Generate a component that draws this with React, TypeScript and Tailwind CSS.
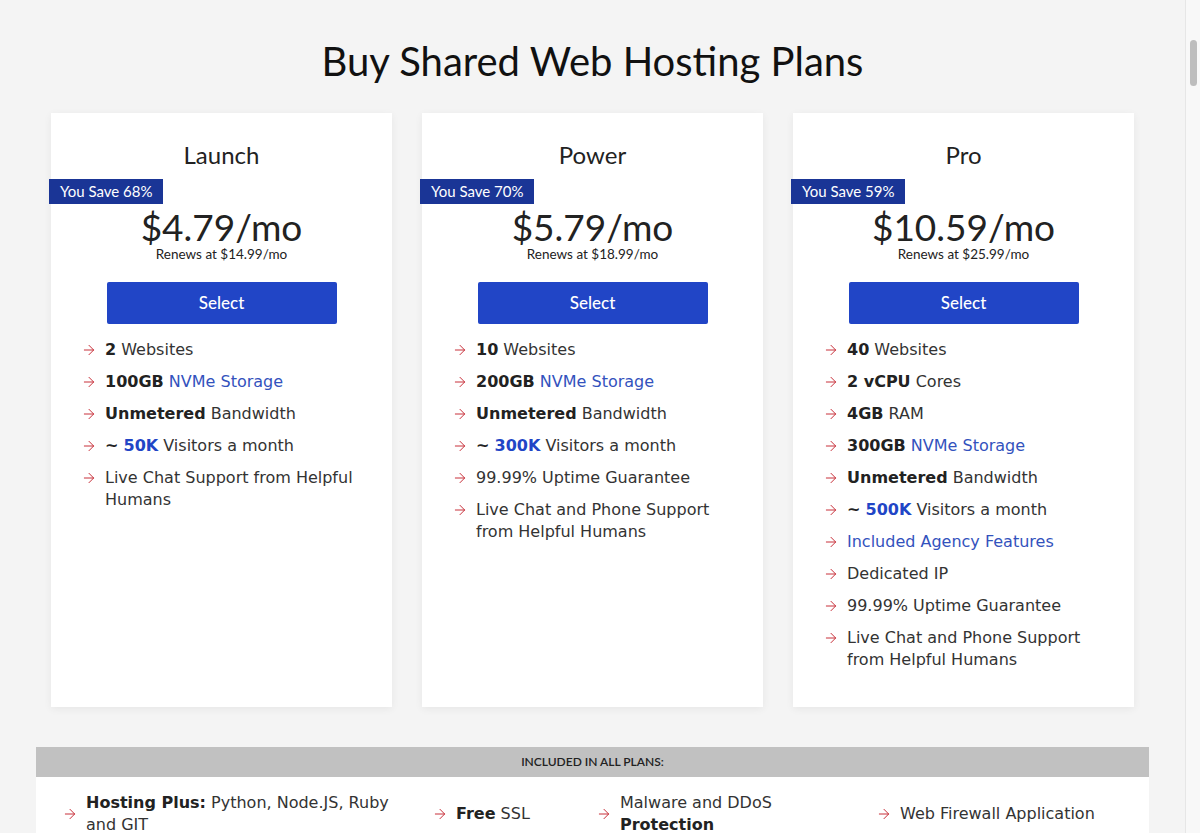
import { ArrowRight } from "lucide-react";
import type { ReactNode } from "react";

type Plan = {
    name: string;
    save: string;
    price: string;
    renews: string;
    features: ReactNode[];
};

const B = ({ children }: { children: ReactNode }) => <span className="font-bold text-[#222]">{children}</span>;
const Link = ({ children }: { children: ReactNode }) => <span className="text-[#3352bd]">{children}</span>;
const Hi = ({ children }: { children: ReactNode }) => <span className="font-bold text-[#2145c6]">{children}</span>;

const plans: Plan[] = [
    {
        name: "Launch",
        save: "You Save 68%",
        price: "$4.79",
        renews: "Renews at $14.99/mo",
        features: [
            <><B>2</B> Websites</>,
            <><B>100GB</B> <Link>NVMe Storage</Link></>,
            <><B>Unmetered</B> Bandwidth</>,
            <><B>~</B> <Hi>50K</Hi> Visitors a month</>,
            <>Live Chat Support from Helpful Humans</>,
        ],
    },
    {
        name: "Power",
        save: "You Save 70%",
        price: "$5.79",
        renews: "Renews at $18.99/mo",
        features: [
            <><B>10</B> Websites</>,
            <><B>200GB</B> <Link>NVMe Storage</Link></>,
            <><B>Unmetered</B> Bandwidth</>,
            <><B>~</B> <Hi>300K</Hi> Visitors a month</>,
            <>99.99% Uptime Guarantee</>,
            <>Live Chat and Phone Support from Helpful Humans</>,
        ],
    },
    {
        name: "Pro",
        save: "You Save 59%",
        price: "$10.59",
        renews: "Renews at $25.99/mo",
        features: [
            <><B>40</B> Websites</>,
            <><B>2 vCPU</B> Cores</>,
            <><B>4GB</B> RAM</>,
            <><B>300GB</B> <Link>NVMe Storage</Link></>,
            <><B>Unmetered</B> Bandwidth</>,
            <><B>~</B> <Hi>500K</Hi> Visitors a month</>,
            <Link>Included Agency Features</Link>,
            <>Dedicated IP</>,
            <>99.99% Uptime Guarantee</>,
            <>Live Chat and Phone Support from Helpful Humans</>,
        ],
    },
];

const Arrow = () => <ArrowRight size={16} strokeWidth={1.5} className="shrink-0 text-[#c8303a]" />;

const PlanCard = ({ plan }: { plan: Plan }) => (
    <div className="flex w-[341px] flex-col items-center bg-white pt-[27px] pb-9 shadow-[0_2px_8px_rgba(0,0,0,0.06)]">
        <h2 className="text-[24px] leading-[30px] text-[#222]">{plan.name}</h2>
        <div className="mt-[9px] -ml-[2px] self-start bg-[#1a3596] px-[11px] text-[15px] leading-[25px] text-white">{plan.save}</div>
        <div className="mt-[3px] text-[37px] leading-[40px] text-[#222]">{plan.price}/mo</div>
        <div className="mt-[-1px] text-[13.5px] leading-[16px] text-[#222]">{plan.renews}</div>
        <button className="mt-[20px] h-[42px] w-[230px] rounded-[2px] bg-[#2145c6] text-[17px] font-medium text-white">Select</button>
        <ul className="mt-[15px] flex w-full flex-col gap-[10px] px-[30px] font-['DejaVu_Sans',sans-serif] text-[16px] leading-[22px] text-[#333]">
            {plan.features.map((f, i) => (
                <li key={i} className="flex items-start gap-[8px]">
                    <span className="mt-[3px]"><Arrow /></span>
                    <span>{f}</span>
                </li>
            ))}
        </ul>
    </div>
);

const included: ReactNode[] = [
    <><B>Hosting Plus:</B> Python, Node.JS, Ruby and GIT</>,
    <><B>Free</B> SSL</>,
    <>Malware and DDoS <B>Protection</B></>,
    <>Web Firewall Application</>,
];

export default function App() {
    return (
        <div className="flex min-h-screen bg-[#f4f4f4] font-['Lato',sans-serif]">
            <main className="flex-1 pb-24">
                <h1 className="pt-[36px] text-center text-[40px] leading-[50px] text-[#111]">Buy Shared Web Hosting Plans</h1>
                <div className="mt-[27px] flex justify-center gap-[30px]">
                    {plans.map((p) => (
                        <PlanCard key={p.name} plan={p} />
                    ))}
                </div>
                <div className="mx-auto mt-10 w-[1113px]">
                    <div className="bg-[#c1c1c1] text-center text-[12px] font-semibold leading-[30px] text-[#222]">INCLUDED IN ALL PLANS:</div>
                    <div className="grid grid-cols-[370px_164px_280px_1fr] bg-white px-[26px] pt-[15px] pb-6 font-['DejaVu_Sans',sans-serif] text-[16px] leading-[22px] text-[#333]">
                        {included.map((it, i) => (
                            <div key={i} className={`flex items-center gap-[8px] ${i === 3 ? "pr-0" : "pr-8"}`}>
                                <Arrow />
                                <span>{it}</span>
                            </div>
                        ))}
                    </div>
                </div>
            </main>
            {/* scrollbar track */}
            <aside className="w-[15px] shrink-0 border-l border-[#e6e6e6] bg-[#f8f8f8] pt-[40px]">
                <div className="mx-auto h-[46px] w-[7px] rounded-full bg-[#bdbdbd]" />
            </aside>
        </div>
    );
}
